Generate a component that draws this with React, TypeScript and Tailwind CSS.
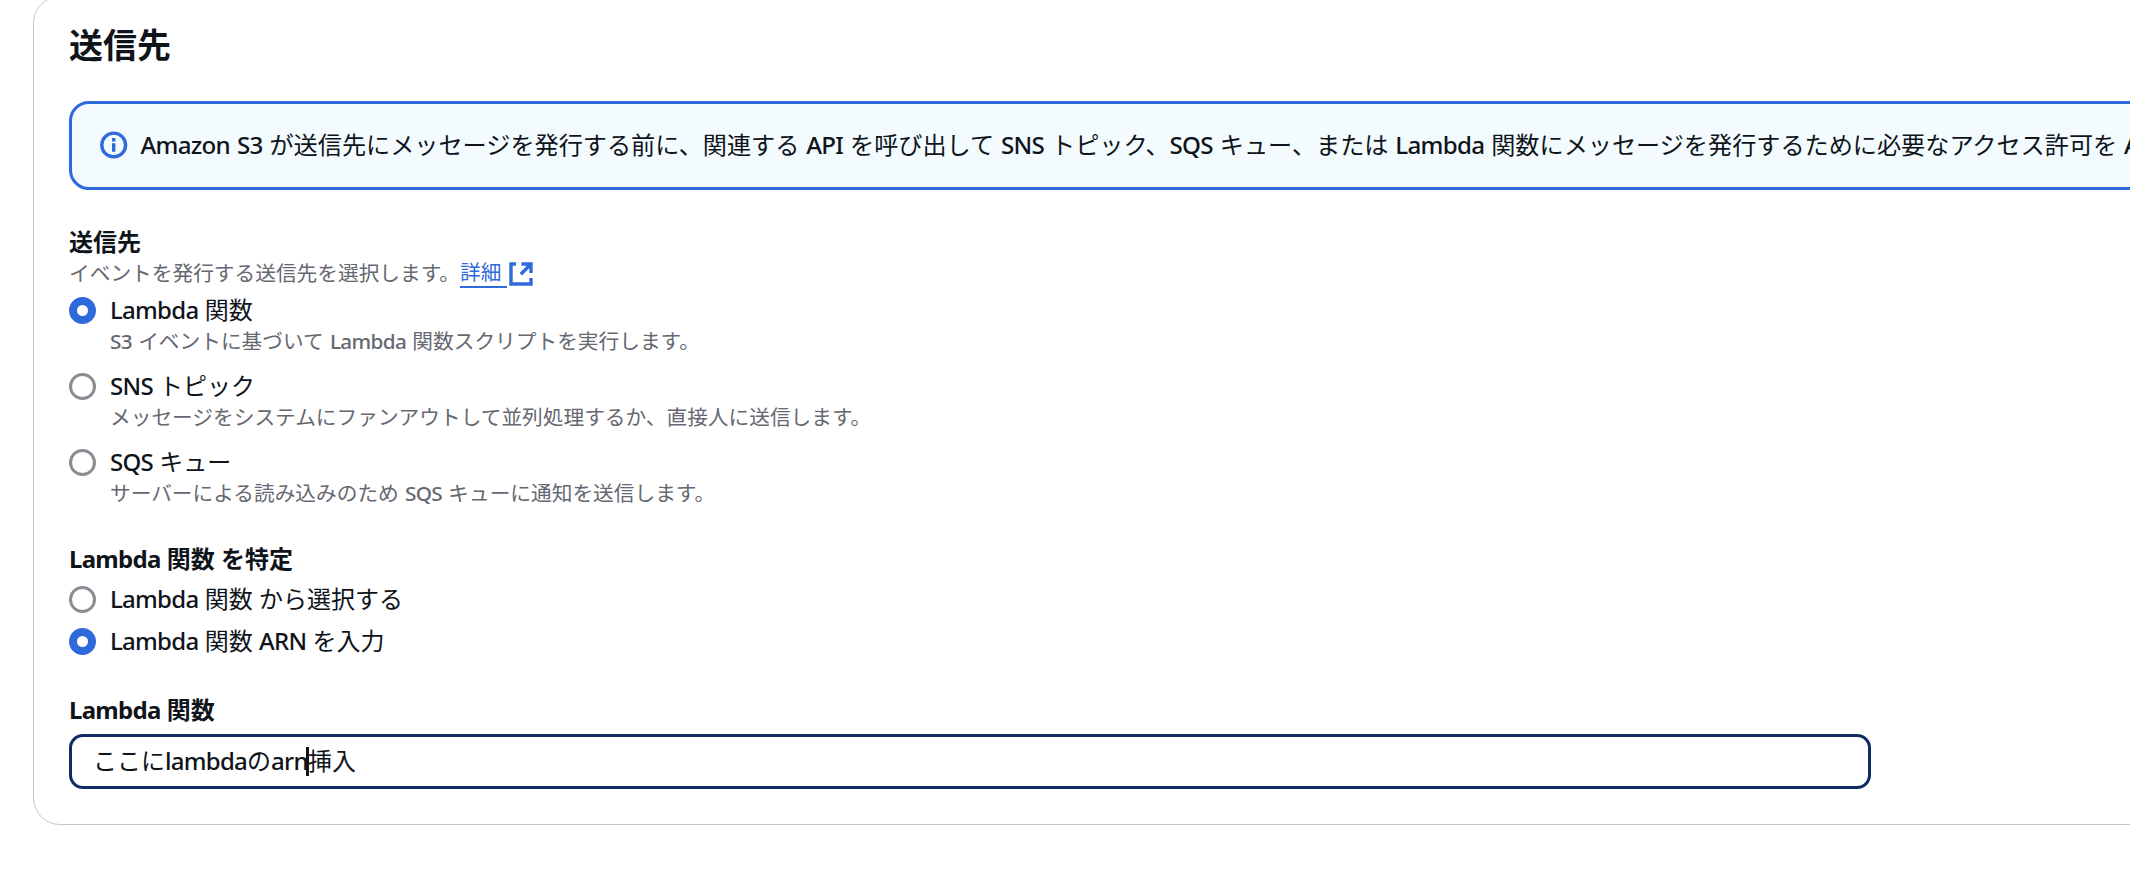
import { useState } from "react"

const DESTINATIONS = [
    { id: "lambda", label: "Lambda 関数", description: "S3 イベントに基づいて Lambda 関数スクリプトを実行します。" },
    { id: "sns", label: "SNS トピック", description: "メッセージをシステムにファンアウトして並列処理するか、直接人に送信します。" },
    { id: "sqs", label: "SQS キュー", description: "サーバーによる読み込みのため SQS キューに通知を送信します。" },
]

const METHODS = [
    { id: "choose", label: "Lambda 関数 から選択する" },
    { id: "arn", label: "Lambda 関数 ARN を入力" },
]

// Latin runs are a bit heavier and tighter than the Japanese around them
function Mixed({ text, bold = false }: { text: string; bold?: boolean }) {
    return (
        <>
            {text.split(/([A-Za-z0-9]+)/).map((part, i) =>
                i % 2 ? (
                    <span key={i} className={bold ? "tracking-[-0.03em]" : "font-medium tracking-[-0.03em]"}>{part}</span>
                ) : part
            )}
        </>
    )
}

function Radio({ checked }: { checked: boolean }) {
    return (
        <span
            className={`mt-px box-border block size-[27px] shrink-0 rounded-full bg-white ${checked ? "border-8 border-[#2f6adb]" : "border-[3px] border-[#8c8c94]"}`}
        />
    )
}

function InfoIcon() {
    return (
        <svg className="-mt-px size-7 shrink-0" viewBox="0 0 28 28" fill="none" stroke="#2f6adb" strokeWidth="3.4">
            <circle cx="13.7" cy="14" r="11.9" />
            <path d="M13.7 12.3v8.5M13.7 7v3.4" />
        </svg>
    )
}

function ExternalIcon() {
    return (
        <svg className="ml-[2px] size-6" viewBox="0 0 24 24" fill="none" stroke="#2f6adb" strokeWidth="3.4">
            <path d="M7 2H2v20h20v-6" />
            <path d="M12.5 2H22v9M11.8 12.2L22 2" />
        </svg>
    )
}

export default function App() {
    const [destination, setDestination] = useState("lambda")
    const [method, setMethod] = useState("arn")

    return (
        <div className="h-[876px] w-[2130px] overflow-hidden bg-white pl-[33px] font-['Noto_Sans','Noto_Sans_CJK_JP',sans-serif] text-[24px] leading-[34px] text-[#0f141a]" lang="ja">
            <section className="-mt-1 h-[829px] w-[2200px] rounded-[27px] border border-[#c6c6cd] pt-[27px] pl-[35px]">
                <h2 className="h-[42px] text-[34px] leading-[42px] font-bold">送信先</h2>

                <div className="mt-[35px] flex h-[89px] items-center rounded-[20px] border-[3px] border-[#2f6adb] bg-[#f3fbff] pl-[28px]">
                    <InfoIcon />
                    <p className="-mt-[2px] ml-[12.5px] text-[24.15px] whitespace-nowrap [word-spacing:0.6px]">
                        <Mixed text="Amazon S3 が送信先にメッセージを発行する前に、関連する API を呼び出して SNS トピック、SQS キュー、または Lambda 関数にメッセージを発行するために必要なアクセス許可を Amazon" />
                    </p>
                </div>

                <h3 className="mt-[35px] font-bold">送信先</h3>
                <p className="flex h-[29px] items-center text-[20.7px] leading-[27px] text-[#656871]">
                    イベントを発行する送信先を選択します。
                    <a className="inline-flex items-center text-[#2f6adb]">
                        <span className="h-[29px] w-[47px] border-b-2 border-[#2f6adb]">詳細</span>
                        <ExternalIcon />
                    </a>
                </p>

                <div className="mt-[5px] flex flex-col gap-[12.3px]">
                    {DESTINATIONS.map((item) => (
                        <label key={item.id} className="block" onClick={() => setDestination(item.id)}>
                            <div className="flex h-[34.3px] items-center gap-[14px]">
                                <Radio checked={destination === item.id} />
                                <span><Mixed text={item.label} /></span>
                            </div>
                            <p className="pl-[41px] text-[20.7px] leading-[29.2px] text-[#656871] [word-spacing:0.8px]">
                                <Mixed text={item.description} />
                            </p>
                        </label>
                    ))}
                </div>

                <h3 className="mt-[34px] font-bold"><Mixed text="Lambda 関数 を特定" bold /></h3>
                <div className="mt-[6px] flex flex-col gap-[7px]">
                    {METHODS.map((item) => (
                        <label key={item.id} className="flex h-[34.3px] items-center gap-[14px]" onClick={() => setMethod(item.id)}>
                            <Radio checked={method === item.id} />
                            <span><Mixed text={item.label} /></span>
                        </label>
                    ))}
                </div>

                <h3 className="mt-[35px] font-bold"><Mixed text="Lambda 関数" bold /></h3>
                <div className="mt-[7px] flex h-[55px] w-[1802px] items-center rounded-[14px] border-[3px] border-[#102a63] pl-[21px]">
                    <span><Mixed text="ここにlambdaのarn" /></span>
                    <span className="-mr-px -ml-[2px] h-[29px] w-[3px] bg-[#0f141a]" />
                    <span>挿入</span>
                </div>
            </section>
        </div>
    )
}
